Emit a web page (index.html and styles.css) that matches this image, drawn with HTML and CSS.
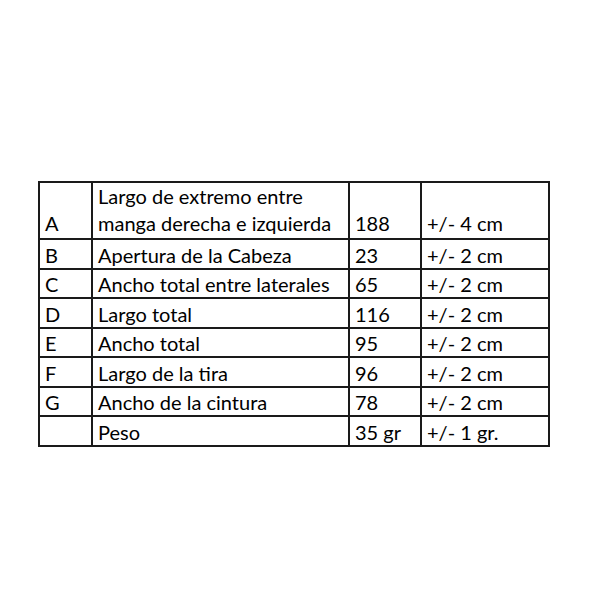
FILE: index.html
```html
<!DOCTYPE html>
<html lang="es">
<head>
<meta charset="utf-8">
<title>Medidas</title>
<link rel="stylesheet" href="styles.css">
</head>
<body>
<div class="page">
  <table class="sizes">
    <colgroup>
      <col class="c-letter">
      <col class="c-desc">
      <col class="c-val">
      <col class="c-tol">
    </colgroup>
    <tbody>
      <tr class="r-tall"><td>A</td><td>Largo de extremo entre<br>manga derecha e izquierda</td><td>188</td><td>+/- 4 cm</td></tr>
      <tr class="r-a"><td>B</td><td>Apertura de la Cabeza</td><td>23</td><td>+/- 2 cm</td></tr>
      <tr class="r-b"><td>C</td><td>Ancho total entre laterales</td><td>65</td><td>+/- 2 cm</td></tr>
      <tr class="r-a"><td>D</td><td>Largo total</td><td>116</td><td>+/- 2 cm</td></tr>
      <tr class="r-b"><td>E</td><td>Ancho total</td><td>95</td><td>+/- 2 cm</td></tr>
      <tr class="r-a"><td>F</td><td>Largo de la tira</td><td>96</td><td>+/- 2 cm</td></tr>
      <tr class="r-b"><td>G</td><td>Ancho de la cintura</td><td>78</td><td>+/- 2 cm</td></tr>
      <tr class="r-a"><td></td><td>Peso</td><td>35 gr</td><td>+/- 1 gr.</td></tr>
    </tbody>
  </table>
</div>
</body>
</html>
```

FILE: styles.css
```css
html, body {
  margin: 0;
  padding: 0;
  background: #ffffff;
}
.page {
  padding: 181px 0 0 38px;
}
.sizes {
  border-collapse: collapse;
  table-layout: fixed;
  width: 512px;
  font-family: Lato, "Open Sans", sans-serif;
  font-size: 20px;
  color: #000;
}
.c-letter { width: 53px; }
.c-desc { width: 257px; }
.c-val { width: 72px; }
.c-tol { width: 128px; }
.sizes td {
  border: 2px solid #1a1a1a;
  vertical-align: bottom;
  padding: 0 0 2px 5px;
  line-height: 22px;
  white-space: nowrap;
  overflow: hidden;
}
.r-tall td { height: 53px; line-height: 27px; padding-bottom: 1px; }
.r-a td { height: 26px; }
.r-b td { height: 25px; }
```
